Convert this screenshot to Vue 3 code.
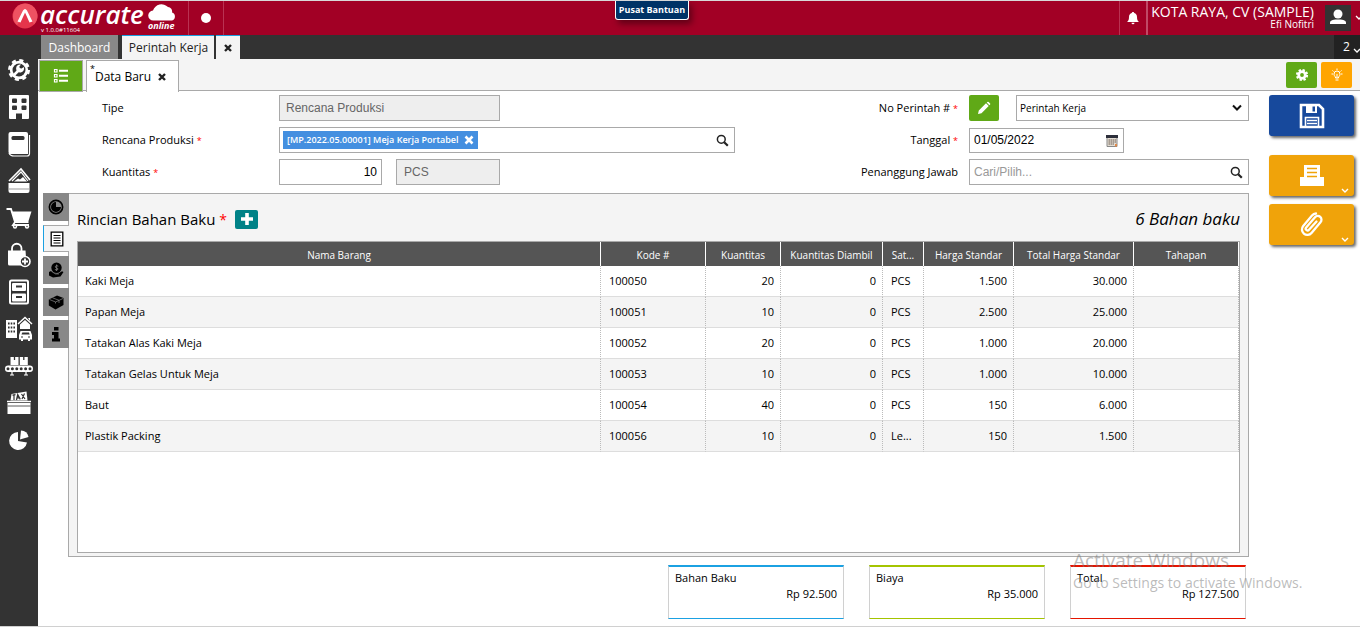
<script setup>
import { ref } from 'vue'

const orderType = ref('Perintah Kerja')
const date = ref('01/05/2022')
const quantity = ref('10')
const person = ref('')

const columns = [
  { label: 'Nama Barang', cls: 'c-name' },
  { label: 'Kode #', cls: 'c-code' },
  { label: 'Kuantitas', cls: 'c-qty' },
  { label: 'Kuantitas Diambil', cls: 'c-taken' },
  { label: 'Sat...', cls: 'c-unit' },
  { label: 'Harga Standar', cls: 'c-price' },
  { label: 'Total Harga Standar', cls: 'c-total' },
  { label: 'Tahapan', cls: 'c-stage' },
]

const rows = [
  ['Kaki Meja', '100050', '20', '0', 'PCS', '1.500', '30.000'],
  ['Papan Meja', '100051', '10', '0', 'PCS', '2.500', '25.000'],
  ['Tatakan Alas Kaki Meja', '100052', '20', '0', 'PCS', '1.000', '20.000'],
  ['Tatakan Gelas Untuk Meja', '100053', '10', '0', 'PCS', '1.000', '10.000'],
  ['Baut', '100054', '40', '0', 'PCS', '150', '6.000'],
  ['Plastik Packing', '100056', '10', '0', 'Le...', '150', '1.500'],
]

const totals = [
  { label: 'Bahan Baku', value: 'Rp 92.500', cls: 'blue' },
  { label: 'Biaya', value: 'Rp 35.000', cls: 'lime' },
  { label: 'Total', value: 'Rp 127.500', cls: 'red' },
]
</script>

<template>
  <div class="page">
    <header class="top">
      <div class="brand">
        <svg class="mark" viewBox="0 0 26 26" aria-hidden="true">
          <circle cx="13" cy="13" r="12.5" fill="#e5354b" />
          <path d="M13 .5a12.500 12.500 0 0 1 9 21L15 8l-6 9-4 5A12.500 12.500 0 0 1 13 .5z" fill="#ee5262" />
          <path d="M5.500 18.500L11 7.500q2-3 4 0l5.500 11-3 1-4.500-10-4.500 10z" fill="#fff" />
        </svg>
        <div class="wordmark">
          <span class="name">accurate</span>
          <span class="version">v 1.0.0#11604</span>
        </div>
        <div class="cloud">
          <svg viewBox="0 0 28 19" aria-hidden="true">
            <path d="M5.500 18.500a5 5 0 0 1-.5-10A9 9 0 0 1 20 5a4.500 4.500 0 0 1 4 5.500 4.200 4.200 0 0 1 0 8z" fill="#fff" />
          </svg>
          <span>online</span>
        </div>
      </div>
      <button class="dot-btn" aria-label="Status"><span></span></button>
      <div class="top-right">
        <button class="bell" aria-label="Notifikasi">
          <svg viewBox="0 0 14 14"><path d="M7 1c.7 0 1.200.5 1.200 1.100C10 2.600 11 4 11 6c0 3 .8 4 2 5H1c1.200-1 2-2 2-5 0-2 1-3.400 2.800-3.900C5.800 1.500 6.300 1 7 1zM5.500 11.800h3a1.500 1.500 0 0 1-3 0z" fill="#fff" /></svg>
        </button>
        <div class="account">
          <span class="company">KOTA RAYA, CV (SAMPLE)</span>
          <span class="user">Efi Nofitri</span>
        </div>
        <button class="avatar" aria-label="Akun">
          <svg viewBox="0 0 26 26"><circle cx="13" cy="9" r="4.500" fill="#fff" /><path d="M5 19v-1.500C5 15 9.500 14.500 13 14.500s8 .5 8 3V19z" fill="#fff" /></svg>
        </button>
        <svg class="chev" viewBox="0 0 8 6"><path d="M1 1l3 3 3-3" fill="none" stroke="#fff" stroke-width="1.300" /></svg>
      </div>
      <button class="help">Pusat Bantuan</button>
    </header>

    <div class="body">
      <nav class="side" aria-label="Menu">
        <button aria-label="Pengaturan">
          <svg viewBox="0 0 28 28">
            <circle cx="14" cy="14" r="9.200" fill="#fff" />
            <circle cx="14" cy="14" r="9.500" fill="none" stroke="#fff" stroke-width="3" stroke-dasharray="4 3.460" />
            <circle cx="14" cy="14" r="6.500" fill="#333" />
            <path d="M10 18l4.500-4.500" stroke="#fff" stroke-width="2.600" stroke-linecap="round" />
            <path d="M18.800 11l-2.200 1.600-1.800-.4-.4-1.800L16 8.600a4 4 0 1 0 2.800 2.400z" fill="#fff" />
          </svg>
        </button>
        <button aria-label="Perusahaan">
          <svg viewBox="0 0 28 28">
            <path d="M5 2h18a1 1 0 0 1 1 1v22a1 1 0 0 1-1 1h-6v-5.500h-6V26H5a1 1 0 0 1-1-1V3a1 1 0 0 1 1-1z" fill="#fff" />
            <g fill="#333"><rect x="7" y="5.500" width="5" height="4.500" rx="1" /><rect x="16.500" y="5.500" width="5" height="4.500" rx="1" /><rect x="7" y="12.500" width="5" height="4.500" rx="1" /><rect x="16.500" y="12.500" width="5" height="4.500" rx="1" /></g>
          </svg>
        </button>
        <button aria-label="Buku Besar">
          <svg viewBox="0 0 28 28">
            <path d="M5.500 2H21a2 2 0 0 1 2 2v20H5.500a2 2 0 0 1-2-2V4a2 2 0 0 1 2-2z" fill="#fff" />
            <rect x="6.500" y="6" width="13" height="4" rx="1.500" fill="#333" />
            <path d="M4 23c1 2.500 3 3 5 3h13q2.500 0 2.500-2.500V5" fill="none" stroke="#fff" stroke-width="1.200" />
          </svg>
        </button>
        <button aria-label="Kas dan Bank">
          <svg viewBox="0 0 28 28">
            <path d="M3.500 16h21v8a2 2 0 0 1-2 2h-17a2 2 0 0 1-2-2z" fill="#fff" />
            <path d="M4 14L16 2l9 11" fill="none" stroke="#fff" stroke-width="1.600" />
            <path d="M7 14l9-9 7 9" fill="none" stroke="#fff" stroke-width="1.200" />
            <path d="M9 14.500l4-3 2 1 3-2.500 4 4.500z" fill="#fff" />
            <path d="M4 22h20" stroke="#999" stroke-width="1" />
          </svg>
        </button>
        <button aria-label="Penjualan">
          <svg viewBox="0 0 28 28">
            <path d="M1.500 5h4.500l4 13h13.500M10 18l-2 3h16" fill="none" stroke="#fff" stroke-width="1.800" />
            <path d="M6.500 7.500H26.500L23.500 17H9.500z" fill="#fff" />
            <circle cx="10" cy="22.500" r="2.200" fill="#fff" /><circle cx="22" cy="22.500" r="2.200" fill="#fff" />
            <circle cx="10" cy="22.500" r=".7" fill="#333" /><circle cx="22" cy="22.500" r=".7" fill="#333" />
          </svg>
        </button>
        <button aria-label="Pembelian">
          <svg viewBox="0 0 28 28">
            <path d="M3 9.500h17.500l1 15H4.500q-1.500 0-1.500-1.500z" fill="#fff" />
            <path d="M7 10V7.500a4.500 4.500 0 0 1 9.500 0V10" fill="none" stroke="#fff" stroke-width="1.800" />
            <circle cx="20" cy="20.500" r="5" fill="#333" stroke="#fff" stroke-width="1.600" />
            <path d="M17 20.500h6M20 17.500v6" stroke="#fff" stroke-width="1.800" />
          </svg>
        </button>
        <button aria-label="Persediaan">
          <svg viewBox="0 0 28 28">
            <rect x="5" y="2.500" width="18" height="23" rx="1.500" fill="#333" stroke="#fff" stroke-width="2" />
            <rect x="7" y="5" width="14" height="8" rx="1" fill="#fff" /><rect x="7" y="15.500" width="14" height="8" rx="1" fill="#fff" />
            <path d="M11 8.500h6M11 19h6" stroke="#333" stroke-width="1.800" />
          </svg>
        </button>
        <button aria-label="Aset Tetap">
          <svg viewBox="0 0 28 28">
            <rect x="1" y="5" width="11" height="18" fill="#fff" />
            <path d="M3 8.500h7M3 12.500h7M3 16.500h7" stroke="#333" stroke-width="2" stroke-dasharray="1.600 1.100" />
            <path d="M13 9L20 2.500 27 9" fill="none" stroke="#fff" stroke-width="1.500" />
            <path d="M15 9.500l5-4.500 5 4.500V14H15zM23 3h2v3z" fill="#fff" />
            <path d="M15.500 16h10l1.500 4v4.500h-2V26h-2v-1.500h-5V26h-2v-1.500h-2V20z" fill="#fff" />
            <path d="M16.500 19.500l.8-2h6.600l.8 2z" fill="#333" /><path d="M16 22h2M23 22h2" stroke="#333" />
          </svg>
        </button>
        <button aria-label="Manufaktur">
          <svg viewBox="0 0 28 28">
            <rect x="5.500" y="5" width="8" height="8" fill="#fff" /><rect x="14.800" y="5" width="8" height="8" fill="#fff" />
            <path d="M9.500 5v3M18.800 5v3" stroke="#333" stroke-width="1.300" />
            <rect x="0" y="13.500" width="28" height="6.500" rx="3.200" fill="#fff" />
            <path d="M3 16.800h23" stroke="#333" stroke-width="3" stroke-dasharray="0 4.400" stroke-linecap="round" />
            <path d="M7 20v2.500M21 20v2.500M5 23h4M19 23h4" stroke="#fff" stroke-width="1.200" />
          </svg>
        </button>
        <button aria-label="Perpajakan">
          <svg viewBox="0 0 28 28">
            <path d="M2.500 14h23v11h-23z" fill="#fff" /><path d="M2 12.500h24" stroke="#fff" stroke-width="1.500" />
            <path d="M5.500 11.500L6.500 5l15-2.500 1 9z" fill="#fff" />
            <path d="M7.500 6.200l3-.5M9 6v5M11.500 11l1.200-5.600 2.600 5M12 8.800h2.500M16.500 5l3.500 5M19.500 4.500L17 10" stroke="#333" stroke-width="1.200" fill="none" />
            <path d="M2.500 17h23" stroke="#333" stroke-width=".8" />
          </svg>
        </button>
        <button aria-label="Laporan">
          <svg viewBox="0 0 28 28">
            <path d="M13 6v9l9 1.500A9 9 0 1 1 13 6z" fill="#fff" /><path d="M16 4.500a8 8 0 0 1 7.500 6.500L15 13.500z" fill="#fff" />
          </svg>
        </button>
      </nav>

      <div class="workspace">
        <div class="tabs">
          <a href="#" class="tab dash">Dashboard</a>
          <a href="#" class="tab current">Perintah Kerja</a>
          <button class="tab-close" aria-label="Tutup"><svg viewBox="0 0 10 10"><path d="M2 2l6 6M8 2L2 8" stroke="#222" stroke-width="2.400" /></svg></button>
          <button class="count">2<svg viewBox="0 0 8 6"><path d="M1 1l3 3 3-3" fill="none" stroke="#fff" stroke-width="1.300" /></svg></button>
        </div>

        <div class="subtabs">
          <button class="list-btn" aria-label="Daftar">
            <svg viewBox="0 0 16 16"><path d="M1.500 1.500h2.500v2.500H1.500zM1.500 6.500h2.500v2.500H1.500zM1.500 11.500h2.500v2.500H1.500z" fill="none" stroke="#fff" stroke-width="1.200" /><path d="M6 2.800h9M6 7.800h9M6 12.800h9" stroke="#fff" stroke-width="2" /></svg>
          </button>
          <div class="doc-tab">
            <sup>*</sup><span>Data Baru</span>
            <button aria-label="Tutup Data Baru"><svg viewBox="0 0 10 10"><path d="M2 2l6 6M8 2L2 8" stroke="#222" stroke-width="2.400" /></svg></button>
          </div>
          <div class="tools">
            <button class="green" aria-label="Atur"><svg viewBox="0 0 14 14"><circle cx="7" cy="7" r="3.300" fill="none" stroke="#fff" stroke-width="2.800" /><circle cx="7" cy="7" r="5" fill="none" stroke="#fff" stroke-width="2.200" stroke-dasharray="2.300 1.620" /></svg></button>
            <button class="amber" aria-label="Petunjuk"><svg viewBox="0 0 14 14"><g fill="none" stroke="#fff" stroke-width="1"><path d="M5.500 10V9C4.500 8 4 7.200 4 6a3 3 0 0 1 6 0c0 1.200-.5 2-1.500 3v1zM5.500 12h3M7 6v4M7 .5V2M1.500 6H3M11 6h1.500M2.500 2.500l1 1M11.500 2.500l-1 1" /></g></svg></button>
          </div>
        </div>

        <div class="content">
          <main class="main">
            <form class="form" @submit.prevent>
              <div class="left">
                <label for="tipe">Tipe</label>
                <div class="cell"><input id="tipe" class="w-type" value="Rencana Produksi" disabled /></div>
                <label for="rencana">Rencana Produksi <i>*</i></label>
                <div class="cell">
                  <div class="picker">
                    <span class="chip">[MP.2022.05.00001] Meja Kerja Portabel<button type="button" aria-label="Hapus"><svg viewBox="0 0 10 10"><path d="M1.500 1.500l7 7M8.500 1.500l-7 7" stroke="#fff" stroke-width="2.600" /></svg></button></span>
                    <input id="rencana" type="text" />
                    <svg class="mag" viewBox="0 0 13 13"><circle cx="5.300" cy="5.300" r="3.900" fill="none" stroke="#222" stroke-width="1.500" /><path d="M8.200 8.200l3.600 3.600" stroke="#222" stroke-width="2.200" /></svg>
                  </div>
                </div>
                <label for="qty">Kuantitas <i>*</i></label>
                <div class="cell">
                  <input id="qty" v-model="quantity" class="w-qty" />
                  <input class="w-unit" value="PCS" aria-label="Satuan" disabled />
                </div>
              </div>
              <div class="right">
                <label for="no">No Perintah # <i>*</i></label>
                <div class="cell">
                  <button type="button" class="pencil" aria-label="Ubah nomor"><svg viewBox="0 0 14 14"><path d="M1 13l.8-3.500L9 2.300l2.700 2.700-7.200 7.200zM9.700 1.600l.7-.7q.6-.5 1.200 0l1.500 1.500q.5.600 0 1.200l-.7.7z" fill="#fff" /></svg></button>
                  <div class="select-wrap">
                    <select id="no" v-model="orderType"><option>Perintah Kerja</option></select>
                    <svg viewBox="0 0 10 8"><path d="M1 1.500l4 4 4-4" fill="none" stroke="#111" stroke-width="2" /></svg>
                  </div>
                </div>
                <label for="tgl">Tanggal <i>*</i></label>
                <div class="cell">
                  <div class="date">
                    <input id="tgl" v-model="date" />
                    <svg viewBox="0 0 12 13"><path d="M1 1.500h10v11H1z" fill="#e3dcd2" stroke="#888" /><path d="M0 1h12v3H0z" fill="#2d2f3a" /><path d="M2.500 6h8M2.500 8h8M2.500 10h6" stroke="#6a5d52" stroke-dasharray="1.500 .5" /><path d="M9 10h2v2.500H9z" fill="#e08a4a" /></svg>
                  </div>
                </div>
                <label for="pj">Penanggung Jawab</label>
                <div class="cell">
                  <div class="picker person">
                    <input id="pj" v-model="person" type="text" placeholder="Cari/Pilih..." />
                    <svg class="mag" viewBox="0 0 13 13"><circle cx="5.300" cy="5.300" r="3.900" fill="none" stroke="#222" stroke-width="1.500" /><path d="M8.200 8.200l3.600 3.600" stroke="#222" stroke-width="2.200" /></svg>
                  </div>
                </div>
              </div>
            </form>

            <div class="detail">
              <div class="vtabs">
                <button aria-label="Proses"><svg viewBox="0 0 16 16"><circle cx="8" cy="8" r="6.600" fill="none" stroke="#000" stroke-width="1.700" /><path d="M8 3v5h5a5 5 0 1 1-5-5z" /></svg></button>
                <button class="on" aria-label="Rincian Bahan Baku"><svg viewBox="0 0 16 16"><path d="M2.200 1.200h11.600v13.600H2.200z" fill="#fff" stroke="#000" stroke-width="1.300" /><path d="M4.500 4.500h7M4.500 7h7M4.500 9.500h7M4.500 12h7" stroke="#000" stroke-width="1.200" /></svg></button>
                <button aria-label="Biaya"><svg viewBox="0 0 16 16"><circle cx="8.500" cy="5.800" r="5.200" /><path d="M1 10l2-1 4 2.500 3 .2 4-2.500 1.500.8-3 4.500L5 15.500l-4-2z" /><path d="M3.500 9.500l4 2.500 3.500 0" fill="none" stroke="#888" stroke-width=".6" /><path d="M10.300 4.200Q8 2.800 7.300 4.500 7.300 5.800 8.700 6 10.500 6.400 9.800 7.500 8.500 8.500 6.900 7.500M8.600 2.500V9" fill="none" stroke="#888" stroke-width=".8" /></svg></button>
                <button aria-label="Barang"><svg viewBox="0 0 16 16"><path d="M.8 5.500L9 1.500l6.500 2.500v7L7.500 15.500.8 11.500z" /><path d="M1.500 5.500L7.500 8 15 4.500M7.500 8v1.500M4.500 3.800l6.500 2.500V9" fill="none" stroke="#888" stroke-width=".7" /></svg></button>
                <button aria-label="Info"><svg viewBox="0 0 16 16"><path d="M6 1h4.500v3.500H6zM4 6h6.500v6.500H12V15.500H4V12.500h2V9H4z" /></svg></button>
              </div>

              <section class="panel">
                <div class="panel-head">
                  <h2>Rincian Bahan Baku <i>*</i></h2>
                  <button class="add" aria-label="Tambah"><svg viewBox="0 0 12 12"><path d="M6 0v12M0 6h12" stroke="#fff" stroke-width="3.600" /></svg></button>
                  <em>6 Bahan baku</em>
                </div>
                <div class="grid">
                  <table>
                    <thead>
                      <tr><th v-for="c in columns" :key="c.label" :class="c.cls">{{ c.label }}</th></tr>
                    </thead>
                    <tbody>
                      <tr v-for="row in rows" :key="row[1]">
                        <td>{{ row[0] }}</td>
                        <td>{{ row[1] }}</td>
                        <td class="num">{{ row[2] }}</td>
                        <td class="num">{{ row[3] }}</td>
                        <td>{{ row[4] }}</td>
                        <td class="num">{{ row[5] }}</td>
                        <td class="num">{{ row[6] }}</td>
                        <td></td>
                      </tr>
                    </tbody>
                  </table>
                </div>
              </section>
            </div>

            <div class="totals">
              <div v-for="t in totals" :key="t.label" class="card" :class="t.cls">
                <span>{{ t.label }}</span>
                <strong>{{ t.value }}</strong>
              </div>
            </div>
          </main>

          <aside class="actions">
            <button class="save" aria-label="Simpan">
              <svg viewBox="0 0 26 26"><path d="M2 2h18l4 4v18H2z" fill="none" stroke="#fff" stroke-width="2.600" /><path d="M7 2h11v8H7z" fill="#fff" /><path d="M13.500 3.500h2.500v5h-2.500z" fill="#17499c" /><path d="M6.500 24V14.500h13V24M8 17.500h10M8 20.500h10" fill="none" stroke="#fff" stroke-width="1.600" /></svg>
            </button>
            <button class="print" aria-label="Cetak">
              <svg viewBox="0 0 26 26"><path d="M5 2h16v16H5z" fill="#fff" /><path d="M8 5.500h10M8 9.500h10M8 13.500h10" stroke="#f0a30a" stroke-width="1.500" /><path d="M1 14h4v3.500h16V14h4v9H1z" fill="#fff" /></svg>
              <svg class="more" viewBox="0 0 8 6"><path d="M1 1l3 3 3-3" fill="none" stroke="#fff" stroke-width="1.400" /></svg>
            </button>
            <button class="attach" aria-label="Lampiran">
              <svg viewBox="0 0 26 26"><path d="M17.500 9.500l-7.500 8.300a1.800 1.800 0 0 1-2.800-2.400L16 5.200a3.700 3.700 0 0 1 5.500 5L12.500 21a5.400 5.400 0 0 1-8.300-7L13 3.500a5.500 5.500 0 0 1 4-2" fill="none" stroke="#fff" stroke-width="2.300" stroke-linecap="round" /></svg>
              <svg class="more" viewBox="0 0 8 6"><path d="M1 1l3 3 3-3" fill="none" stroke="#fff" stroke-width="1.400" /></svg>
            </button>
          </aside>
        </div>
      </div>
    </div>

    <div class="watermark">
      <p class="w1">Activate Windows</p>
      <p class="w2">Go to Settings to activate Windows.</p>
    </div>
  </div>
</template>

<style>
html, body { margin: 0; }
</style>

<style scoped>
* { box-sizing: border-box; }
.page {
  position: relative; min-height: 100vh; display: flex; flex-direction: column; background: #fff;
  border-top: 1px solid #d8d8d8; border-bottom: 1px solid #d0d0d0; overflow: hidden;
  font-family: "Open Sans", "Noto Sans", sans-serif; font-size: 11px; line-height: 16px; color: #000;
}
button { border: 0; padding: 0; margin: 0; background: none; font: inherit; color: inherit; display: flex; align-items: center; justify-content: center; cursor: pointer; }
svg { display: block; flex: none; }
a { text-decoration: none; }
input, select { font-family: "Liberation Sans", sans-serif; font-size: 12px; color: #000; border: 1px solid #a9a9a9; border-radius: 0; background: #fff; height: 26px; outline: 0; margin: 0; min-width: 0; }
i { color: #f00; font-style: normal; font-size: 9px; }

.top { position: relative; display: flex; height: 34px; background: #a20025; color: #fff; }
.brand { display: flex; width: 189px; padding-left: 12px; border-right: 1px solid #b93252; }
.mark { width: 26px; height: 26px; margin-top: 2px; }
.wordmark { display: flex; flex-direction: column; margin-left: 2px; width: 108px; }
.name { font-size: 26px; line-height: 26px; font-weight: 600; font-style: italic; }
.version { font-size: 6px; line-height: 7px; padding-left: 1px; white-space: nowrap; }
.cloud { font-size: 9px; font-weight: 700; font-style: italic; }
.cloud svg { width: 28px; height: 19px; margin-top: 1px; }
.cloud span { display: block; line-height: 10px; }
.dot-btn { width: 35px; border-right: 1px solid #b93252; }
.dot-btn span { width: 10px; height: 10px; border-radius: 50%; background: #fff; }
.top-right { margin-left: auto; display: flex; align-items: center; }
.bell { width: 29px; height: 34px; border-left: 1px solid #b93252; border-right: 2px solid #c04a66; }
.bell svg { width: 14px; height: 14px; }
.account { display: flex; flex-direction: column; align-items: flex-end; margin-left: 3px; padding-bottom: 2px; }
.company { font-size: 14px; line-height: 15px; }
.user { font-size: 10px; line-height: 11px; }
.avatar { width: 26px; height: 26px; margin-left: 11px; background: #333; }
.avatar svg { width: 26px; height: 26px; }
.chev { width: 8px; height: 6px; margin: 0 -3px 0 4px; }
.help { position: absolute; left: 50%; top: 0; transform: translateX(-50%); margin-left: -28px; width: 74px; height: 19px; background: #036; border: 1px solid #fff; border-top: 0; border-radius: 0 0 3px 3px; font-size: 9px; font-weight: 700; white-space: nowrap; box-shadow: 3px 4px 6px rgba(0, 0, 0, .4); }

.body { flex: 1; display: flex; }
.side { width: 38px; flex: none; background: #333; padding-top: 16px; }
.side button { width: 38px; height: 37px; }
.side svg { width: 28px; height: 28px; }
.workspace { flex: 1; min-width: 0; display: flex; flex-direction: column; }

.tabs { display: flex; height: 24px; background: #333; padding-left: 3px; font-size: 12px; }
.tab { display: flex; align-items: center; justify-content: center; white-space: nowrap; padding-top: 2px; }
.dash { width: 77px; background: #888; color: #fff; }
.current { width: 92px; margin-left: 4px; padding-top: 1px; padding-left: 1px; background: #f4f4f4; color: #222; border-top: 1px solid #1ba1e2; }
.tab-close { width: 24px; margin-left: 2px; background: #f4f4f4; border-top: 1px solid #1ba1e2; }
.tab-close svg, .doc-tab svg { width: 10px; height: 10px; }
.count { margin-left: auto; width: 26px; background: #222; color: #fff; gap: 3px; padding-left: 10px; }
.count svg { width: 8px; height: 6px; margin-top: 8px; }

.subtabs { display: flex; height: 32px; background: #f4f4f4; border-bottom: 1px solid #a9a9a9; padding: 1px 8px 0 1px; }
.list-btn { width: 44px; height: 32px; background: #60a917; border: 1px solid #a9a9a9; }
.list-btn svg { width: 16px; height: 16px; }
.doc-tab { display: flex; align-items: center; width: 93px; height: 32px; margin-left: 3px; padding-left: 3px; background: #fff; border: 1px solid #a9a9a9; border-bottom: 0; font-size: 12px; }
.doc-tab sup { align-self: flex-start; font-size: 9px; line-height: 16px; }
.doc-tab button { margin-left: 6px; }
.tools { margin-left: auto; display: flex; gap: 4px; padding-top: 2px; }
.tools button { width: 31px; height: 26px; border-radius: 2px; }
.tools svg { width: 14px; height: 14px; }
.green { background: #60a917; }
.amber { background: #ffa500; }

.content { flex: 1; display: flex; }
.main { flex: 1; min-width: 0; display: flex; flex-direction: column; padding-left: 5px; }
.form { display: flex; justify-content: space-between; padding-top: 4px; }
.left, .right { display: grid; grid-auto-rows: 26px; row-gap: 6px; align-items: center; }
.left { grid-template-columns: 177px 456px; padding-left: 59px; }
.right { grid-template-columns: auto 280px; column-gap: 11px; }
.right label { text-align: right; }
.cell { display: flex; }
.w-type { width: 221px; padding: 0 6px; }
.w-qty { width: 103px; text-align: right; padding: 0 4px; }
.w-unit { width: 104px; margin-left: 14px; padding: 0 7px; }
input:disabled { background: #eee; color: #666; }
.picker { display: flex; align-items: center; width: 100%; height: 26px; border: 1px solid #a9a9a9; padding: 0 5px 0 3px; }
.picker input { flex: 1; border: 0; height: 22px; padding: 0 2px; }
.person input { padding-left: 1px; }
.picker input::placeholder { color: #999; }
.mag { width: 13px; height: 13px; }
.chip { display: flex; align-items: center; height: 18px; padding: 0 4px; gap: 5px; background: #448fe0; color: #fff; font-size: 9px; font-weight: 600; white-space: nowrap; }
.chip svg { width: 10px; height: 10px; }
.pencil { width: 30px; height: 26px; background: #60a917; border-radius: 2px; }
.pencil svg { width: 14px; height: 14px; }
.select-wrap { position: relative; flex: 1; margin-left: 17px; }
.select-wrap select { appearance: none; width: 100%; padding: 0 3px; font-family: "Open Sans", sans-serif; font-size: 10px; }
.select-wrap svg { position: absolute; right: 7px; top: 9px; width: 10px; height: 8px; }
.date { display: flex; align-items: center; width: 155px; height: 25px; border: 1px solid #a9a9a9; padding-right: 5px; }
.date input { flex: 1; border: 0; height: 21px; padding: 0 4px; }
.date svg { width: 12px; height: 13px; }

.detail { flex: 1; display: flex; margin-top: 8px; }
.vtabs { display: flex; flex-direction: column; gap: 4px; width: 25px; flex: none; }
.vtabs button { position: relative; width: 26px; height: 28px; background: #888; }
.vtabs .on { height: 27px; background: #f4f4f4; border: 1px solid #a9a9a9; border-left-color: #1ba1e2; border-right: 0; }
.vtabs svg { width: 16px; height: 16px; }
.panel { flex: 1; min-width: 0; display: flex; flex-direction: column; background: #f4f4f4; border: 1px solid #a9a9a9; padding: 0 8px 3px; }
.panel-head { display: flex; align-items: center; height: 47px; padding-top: 3px; }
h2 { margin: 0; font-size: 15px; line-height: 22px; font-weight: 400; }
h2 i { font-size: 14px; }
.add { width: 23px; height: 19px; margin-left: 8px; background: #008287; border-radius: 2px; }
.add svg { width: 12px; height: 12px; }
em { margin-left: auto; font-size: 17px; line-height: 22px; }
.grid { flex: 1; background: #fff; border: 1px solid #a9a9a9; }
table { width: 100%; table-layout: fixed; border-collapse: separate; border-spacing: 0; }
th { height: 24px; padding: 1px 0 0; background: #555; color: #fff; font-size: 10px; font-weight: 400; white-space: nowrap; border-right: 1px solid #fff; }
td { height: 31px; padding: 0 8px; white-space: nowrap; border-right: 1px dotted #bbb; border-bottom: 1px solid #ddd; }
td:first-child { padding-left: 7px; }
td.num { text-align: right; padding-right: 6px; }
tbody tr:nth-child(even) { background: #f4f4f4; }
.c-code { width: 105px; }
.c-qty { width: 75px; }
.c-taken { width: 102px; }
.c-unit { width: 41px; }
.c-price { width: 90px; }
.c-total { width: 120px; }
.c-stage { width: 105px; }

.totals { display: flex; justify-content: flex-end; gap: 25px; padding: 8px 3px 7px 0; }
.card { width: 176px; height: 54px; padding: 3px 6px; display: flex; flex-direction: column; border: 1px solid #d0d0d0; border-top-width: 2px; }
.card strong { font-weight: 400; text-align: right; }
.blue { border-top-color: #1ba1e2; border-bottom-color: #1ba1e2; }
.lime { border-top-color: #a4c400; border-bottom-color: #a4c400; }
.red { border-top-color: #e51400; border-bottom-color: #e51400; }

.actions { width: 111px; flex: none; display: flex; flex-direction: column; align-items: flex-start; gap: 8px; padding: 4px 0 0 20px; }
.actions button { position: relative; width: 85px; height: 41px; border-radius: 3px; background: #f0a30a; box-shadow: 2px 2px 3px rgba(0, 0, 0, .6); }
.actions button.save { background: #17499c; margin-bottom: 11px; }
.actions svg { width: 26px; height: 26px; }
.actions .more { position: absolute; right: 5px; bottom: 2px; width: 8px; height: 6px; }

.watermark { position: absolute; left: 1073px; bottom: 33px; color: rgba(120, 120, 120, .5); pointer-events: none; white-space: nowrap; }
.watermark p { margin: 0; }
.w1 { font-size: 19px; line-height: 26px; }
.w2 { font-size: 14px; line-height: 20px; }
</style>
